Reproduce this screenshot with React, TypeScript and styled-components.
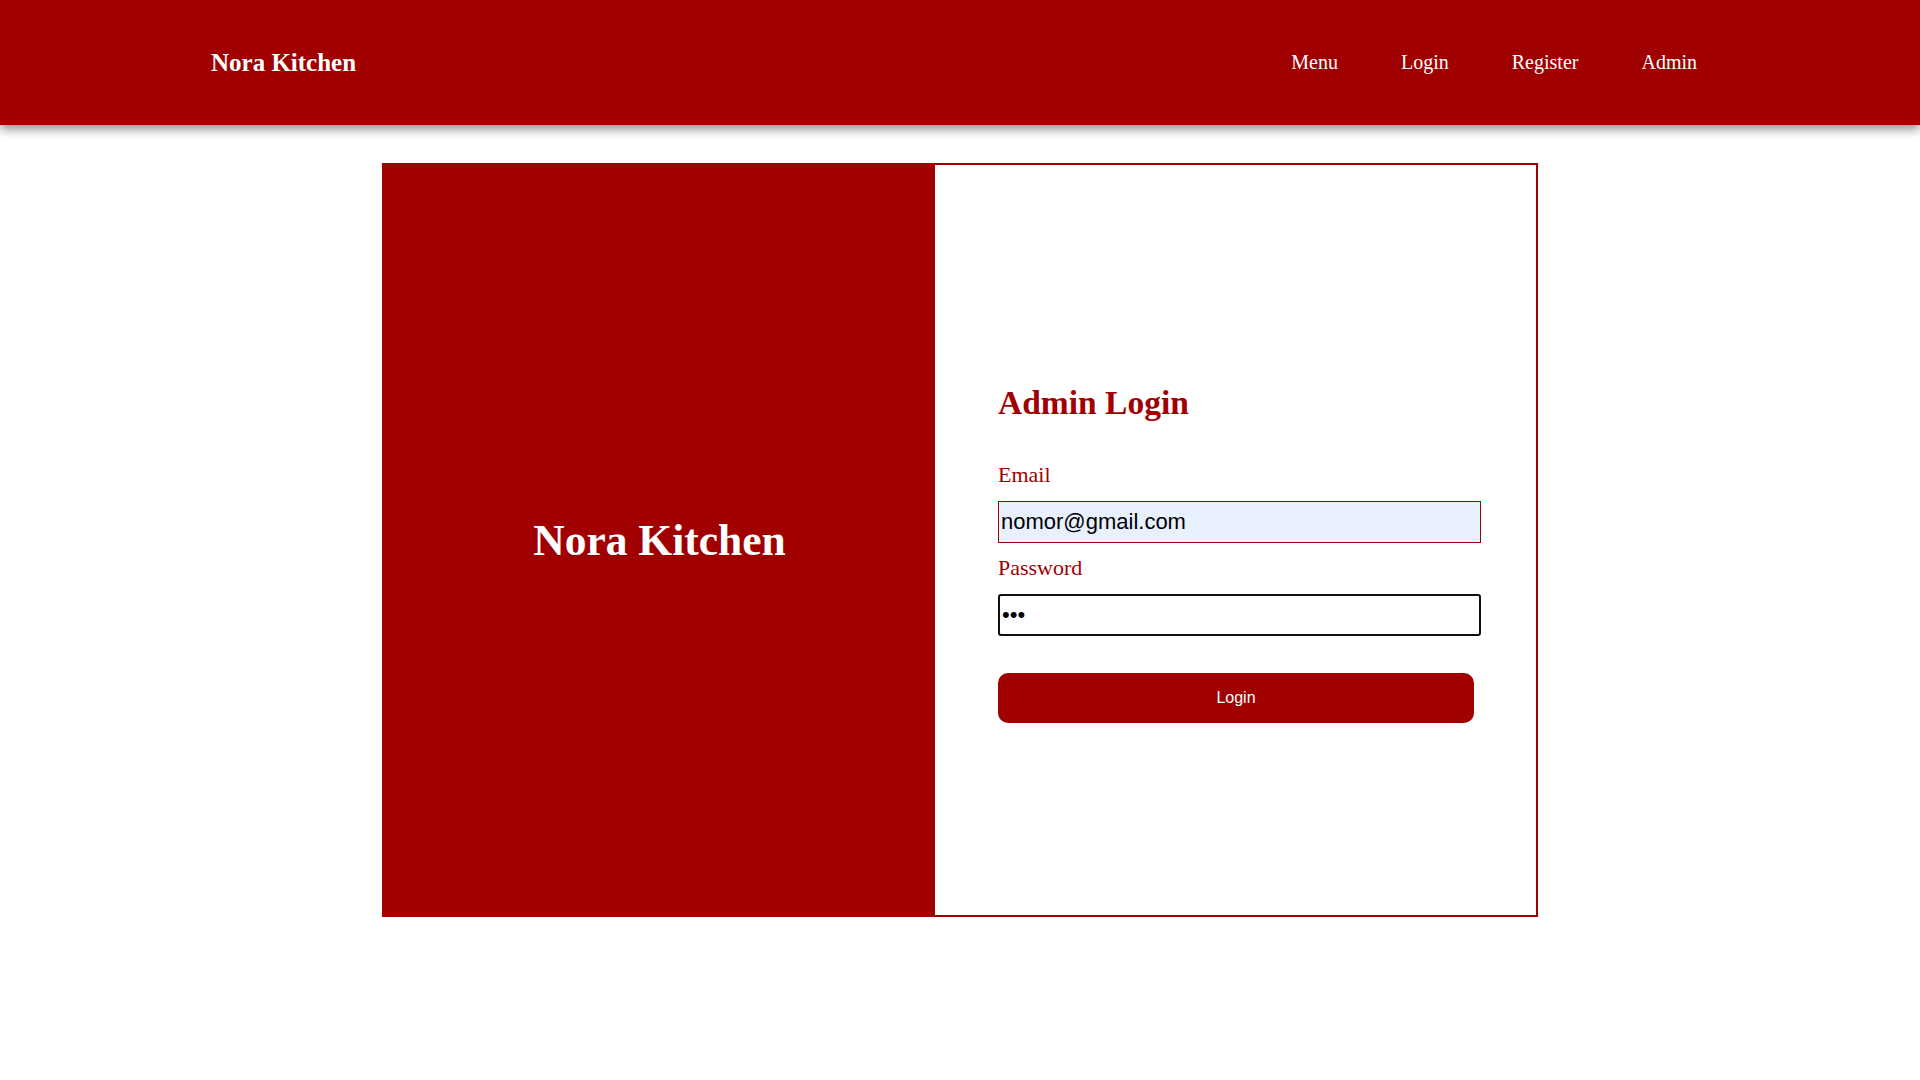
import React from "react";
import styled, { createGlobalStyle } from "styled-components";

const GlobalStyle = createGlobalStyle`
  html, body {
    margin: 0;
    padding: 0;
    background: #ffffff;
    font-family: "Liberation Serif", "Times New Roman", serif;
  }
  * { box-sizing: border-box; }
`;

const RED = "#a00000";

const NavBar = styled.header`
  height: 125px;
  background: ${RED};
  box-shadow: 0 4px 10px rgba(0, 0, 0, 0.45);
  display: flex;
  align-items: center;
  justify-content: space-between;
  padding: 0 223px 0 211px;
  position: relative;
  z-index: 1;
`;

const Brand = styled.div`
  color: #ffffff;
  font-weight: bold;
  font-size: 25px;
`;

const NavList = styled.nav`
  display: flex;
  align-items: center;
  gap: 63px;
`;

const NavLink = styled.a`
  color: #ffffff;
  font-size: 20px;
  text-decoration: none;
  cursor: pointer;
`;

const Main = styled.main`
  display: flex;
  justify-content: center;
  padding-top: 38px;
`;

const Card = styled.section`
  width: 1156px;
  height: 754px;
  border: 2px solid ${RED};
  display: flex;
`;

const BrandPanel = styled.div`
  width: 551px;
  background: ${RED};
  display: flex;
  align-items: center;
  justify-content: center;
`;

const BrandTitle = styled.h1`
  margin: 0;
  color: #ffffff;
  font-size: 43.5px;
  font-weight: bold;
`;

const FormPanel = styled.div`
  flex: 1;
  display: flex;
  flex-direction: column;
  justify-content: center;
  padding: 27px 55px 0 63px;
`;

const Heading = styled.h2`
  margin: 0 0 40px;
  color: ${RED};
  font-size: 33.5px;
  line-height: 38px;
  font-weight: bold;
`;

const Label = styled.label<{ $gap: number }>`
  display: block;
  color: ${RED};
  font-size: 22px;
  line-height: 25px;
  margin-bottom: ${(p) => p.$gap}px;
`;

const Input = styled.input<{ $focused?: boolean }>`
  display: block;
  width: 483px;
  height: 42px;
  margin: 0 0 ${(p) => (p.$focused ? 37 : 12)}px;
  padding: 0 2px;
  font-family: "Liberation Sans", Arial, sans-serif;
  font-size: 22px;
  color: #000;
  background: ${(p) => (p.$focused ? "#ffffff" : "#e8f0fe")};
  border: ${(p) => (p.$focused ? "2px solid #101010" : `1px solid ${RED}`)};
  border-radius: ${(p) => (p.$focused ? "3px" : "0")};
  outline: none;
`;

const Button = styled.button`
  width: 476px;
  height: 50px;
  border: none;
  border-radius: 10px;
  background: ${RED};
  color: #ffffff;
  font-family: "Liberation Sans", Arial, sans-serif;
  font-size: 16px;
  cursor: pointer;
`;

export default function App() {
  return (
    <>
      <GlobalStyle />
      <NavBar>
        <Brand>Nora Kitchen</Brand>
        <NavList>
          <NavLink>Menu</NavLink>
          <NavLink>Login</NavLink>
          <NavLink>Register</NavLink>
          <NavLink>Admin</NavLink>
        </NavList>
      </NavBar>
      <Main>
        <Card>
          <BrandPanel>
            <BrandTitle>Nora Kitchen</BrandTitle>
          </BrandPanel>
          <FormPanel>
            <Heading>Admin Login</Heading>
            <Label $gap={14}>Email</Label>
            <Input type="email" defaultValue="nomor@gmail.com" />
            <Label $gap={14}>Password</Label>
            <Input type="password" defaultValue="abc" $focused />
            <Button>Login</Button>
          </FormPanel>
        </Card>
      </Main>
    </>
  );
}
